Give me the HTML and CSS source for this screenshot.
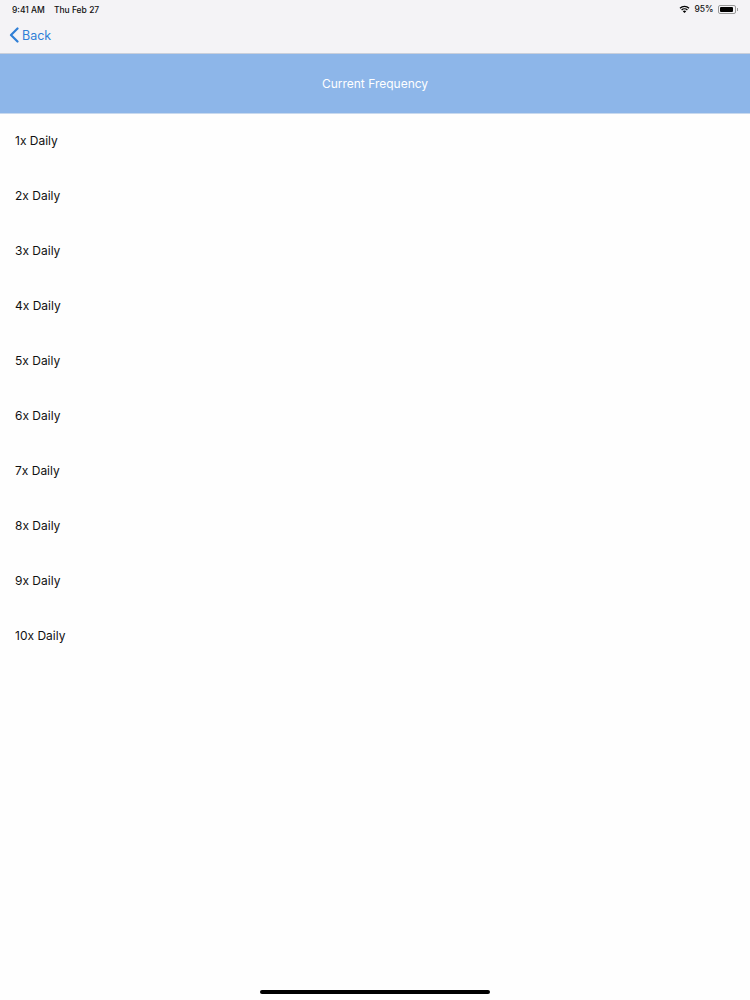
FILE: index.html
```html
<!DOCTYPE html>
<html>
<head>
<meta charset="utf-8">
<link rel="stylesheet" href="styles.css">
</head>
<body>
<div class="screen">
  <div class="top">
    <div class="status">
      <div class="status-left"><span>9:41 AM</span><span>Thu Feb 27</span></div>
      <div class="status-right">
        <svg class="wifi" width="11" height="8" viewBox="0 0 11 8"><path d="M5.5 8 L3.8 6.2 A2.5 2.5 0 0 1 7.2 6.2 Z" fill="#000"/><path d="M2.6 5 A4.2 4.2 0 0 1 8.4 5" stroke="#000" stroke-width="1.3" fill="none"/><path d="M1 3.2 A6.6 6.6 0 0 1 10 3.2" stroke="#000" stroke-width="1.3" fill="none"/></svg>
        <span class="pct">95%</span>
        <span class="battery"><span class="fill"></span></span><span class="cap"></span>
      </div>
    </div>
    <div class="nav">
      <svg class="chev" width="10" height="16" viewBox="0 0 10 16"><path d="M8.5 1.5 L2 8 L8.5 14.5" stroke="#2f7fd6" stroke-width="2.2" fill="none" stroke-linecap="round" stroke-linejoin="round"/></svg>
      <span class="back">Back</span>
    </div>
  </div>
  <div class="banner">Current Frequency</div>
  <ul class="list">
    <li>1x Daily</li>
    <li>2x Daily</li>
    <li>3x Daily</li>
    <li>4x Daily</li>
    <li>5x Daily</li>
    <li>6x Daily</li>
    <li>7x Daily</li>
    <li>8x Daily</li>
    <li>9x Daily</li>
    <li>10x Daily</li>
  </ul>
  <div class="home"></div>
</div>
</body>
</html>
```
FILE: styles.css
```css
html, body {
  margin: 0;
  padding: 0;
  background: #fefefe;
}
.screen {
  width: 750px;
  height: 1000px;
  position: relative;
  font-family: "Inter", "Liberation Sans", sans-serif;
  color: #111;
  overflow: hidden;
}
.top {
  background: #f4f3f6;
  height: 53px;
  border-bottom: 1px solid #c9cfdb;
}
.status {
  height: 18px;
  display: flex;
  justify-content: space-between;
  align-items: center;
  padding: 0 12px 0 12px;
  font-size: 8.5px;
  font-weight: 500;
}
.status-left {
  display: flex;
  gap: 9px;
  padding-top: 1px;
}
.status-right {
  display: flex;
  align-items: center;
  gap: 3px;
}
.wifi { margin-right: 1px; }
.battery {
  border: 1px solid #999;
  border-radius: 2px;
  padding: 1px;
  box-sizing: border-box;
  display: inline-flex;
  margin-left: 1px;
  width: 18px;
  height: 9px;
}
.fill {
  flex: 0 0 95%;
  background: #000;
  border-radius: 1px;
}
.cap {
  width: 1.5px;
  height: 3px;
  background: #999;
  margin-left: -2px;
}
.nav {
  height: 35px;
  display: flex;
  align-items: center;
  padding-left: 9px;
  gap: 3px;
}
.chev { margin-top: -1px; }
.back {
  color: #2f7fd6;
  font-size: 12.5px;
  margin-top: 0;
}
.banner {
  height: 60px;
  background: #8db6e9;
  color: #fff;
  font-size: 12px;
  display: flex;
  align-items: center;
  justify-content: center;
  border-bottom: 1px solid #c8d9ee;
  box-sizing: border-box;
}
.list {
  list-style: none;
  margin: 0;
  padding: 0;
}
.list li {
  height: 55px;
  display: flex;
  align-items: center;
  padding-left: 15px;
  padding-bottom: 2px;
  box-sizing: border-box;
  font-size: 12px;
  color: #111;
}
.home {
  position: absolute;
  left: 260px;
  bottom: 6px;
  width: 230px;
  height: 4px;
  border-radius: 2px;
  background: #000;
}
```
